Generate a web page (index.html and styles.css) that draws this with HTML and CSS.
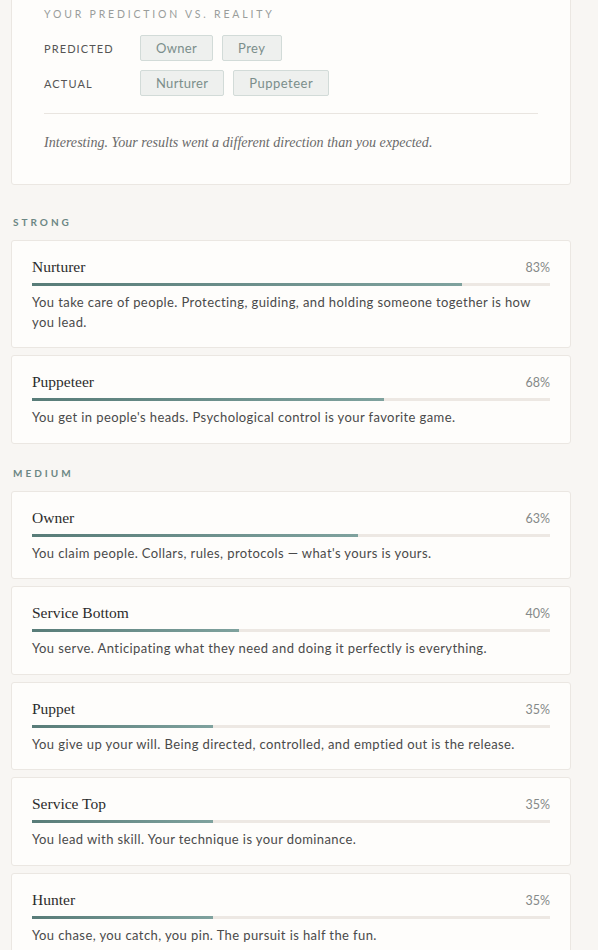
FILE: index.html
```html
<!DOCTYPE html>
<html>
<head>
<meta charset="utf-8">
<link rel="stylesheet" href="styles.css">
</head>
<body>
<main class="page">
  <section class="card compare">
    <h2 class="eyebrow">Your prediction vs. reality</h2>
    <div class="compare-row">
      <span class="row-label">Predicted</span>
      <div class="tags"><span class="tag">Owner</span><span class="tag">Prey</span></div>
    </div>
    <div class="compare-row">
      <span class="row-label">Actual</span>
      <div class="tags"><span class="tag">Nurturer</span><span class="tag">Puppeteer</span></div>
    </div>
    <hr class="divider">
    <p class="verdict">Interesting. Your results went a different direction than you expected.</p>
  </section>

  <h3 class="group-label first">Strong</h3>
  <div class="list">
    <article class="card result">
      <div class="result-head"><span class="result-name">Nurturer</span><span class="result-pct">83%</span></div>
      <div class="track"><div class="fill" style="width:83%"></div></div>
      <p class="result-desc">You take care of people. Protecting, guiding, and holding someone together is how you lead.</p>
    </article>
    <article class="card result">
      <div class="result-head"><span class="result-name">Puppeteer</span><span class="result-pct">68%</span></div>
      <div class="track"><div class="fill" style="width:68%"></div></div>
      <p class="result-desc">You get in people's heads. Psychological control is your favorite game.</p>
    </article>
  </div>

  <h3 class="group-label">Medium</h3>
  <div class="list">
    <article class="card result">
      <div class="result-head"><span class="result-name">Owner</span><span class="result-pct">63%</span></div>
      <div class="track"><div class="fill" style="width:63%"></div></div>
      <p class="result-desc">You claim people. Collars, rules, protocols — what's yours is yours.</p>
    </article>
    <article class="card result">
      <div class="result-head"><span class="result-name">Service Bottom</span><span class="result-pct">40%</span></div>
      <div class="track"><div class="fill" style="width:40%"></div></div>
      <p class="result-desc">You serve. Anticipating what they need and doing it perfectly is everything.</p>
    </article>
    <article class="card result">
      <div class="result-head"><span class="result-name">Puppet</span><span class="result-pct">35%</span></div>
      <div class="track"><div class="fill" style="width:35%"></div></div>
      <p class="result-desc">You give up your will. Being directed, controlled, and emptied out is the release.</p>
    </article>
    <article class="card result">
      <div class="result-head"><span class="result-name">Service Top</span><span class="result-pct">35%</span></div>
      <div class="track"><div class="fill" style="width:35%"></div></div>
      <p class="result-desc">You lead with skill. Your technique is your dominance.</p>
    </article>
    <article class="card result">
      <div class="result-head"><span class="result-name">Hunter</span><span class="result-pct">35%</span></div>
      <div class="track"><div class="fill" style="width:35%"></div></div>
      <p class="result-desc">You chase, you catch, you pin. The pursuit is half the fun.</p>
    </article>
  </div>
</main>
</body>
</html>
```

FILE: styles.css
```css
* { box-sizing: border-box; }
html, body { margin: 0; padding: 0; }
body {
  background: #f8f6f3;
  font-family: "Lato", "Noto Sans", sans-serif;
  color: #4a4a4a;
  overflow: hidden;
  height: 950px;
}
.page {
  padding: 0 27px 0 11px;
}
.card {
  background: #fefdfb;
  border: 1px solid #ebe7e2;
  border-radius: 3px;
}
.compare {
  margin-top: -30px;
  padding: 36px 32px 32px 32px;
}
.eyebrow {
  margin: 0;
  font-size: 10.5px;
  font-weight: 400;
  letter-spacing: 2.8px;
  text-transform: uppercase;
  color: #9a9d9b;
  line-height: 14px;
}
.compare-row {
  display: flex;
  align-items: center;
  margin-top: 9px;
}
.eyebrow + .compare-row { margin-top: 14px; }
.row-label {
  width: 96px;
  flex: none;
  font-size: 11px;
  letter-spacing: 1.1px;
  text-transform: uppercase;
  color: #555;
}
.tags { display: flex; gap: 9px; }
.tag {
  display: inline-block;
  height: 26px;
  line-height: 24px;
  padding: 0 15px;
  font-size: 13px;
  letter-spacing: 0.3px;
  color: #7b8e8b;
  background: #eef0ee;
  border: 1px solid #d2dbd8;
  border-radius: 2px;
}
.tag:last-child { letter-spacing: 0.5px; }
.divider {
  border: 0;
  border-top: 1px solid #e9e5e0;
  margin: 17px 0 0 0;
}
.verdict {
  margin: 18px 0 0 0;
  font-family: "Liberation Serif", "DejaVu Serif", serif;
  font-style: italic;
  font-size: 14.1px;
  color: #6a6a6a;
  line-height: 20px;
}
.group-label {
  margin: 22px 0 11px 2px;
  font-size: 10px;
  font-weight: 700;
  letter-spacing: 3px;
  text-transform: uppercase;
  color: #6c8784;
  line-height: 14px;
}
.group-label.first { margin-top: 30px; }
.list {
  display: flex;
  flex-direction: column;
  gap: 7px;
}
.result {
  padding: 15px 20px 15px 20px;
}
.result-head {
  display: flex;
  justify-content: space-between;
  align-items: baseline;
  line-height: 22px;
}
.result-name {
  font-family: "Liberation Serif", "DejaVu Serif", serif;
  font-size: 15.5px;
  color: #2b2b2b;
}
.result-pct {
  font-size: 12.5px;
  color: #858988;
}
.track {
  margin-top: 4px;
  height: 3px;
  background: #ede8e3;
}
.fill {
  height: 100%;
  background: linear-gradient(90deg, #587c78, #7fa29e);
}
.result-desc {
  margin: 7px 0 0 0;
  font-size: 13px;
  letter-spacing: 0.4px;
  line-height: 19.5px;
  color: #4a4a4a;
}
```
